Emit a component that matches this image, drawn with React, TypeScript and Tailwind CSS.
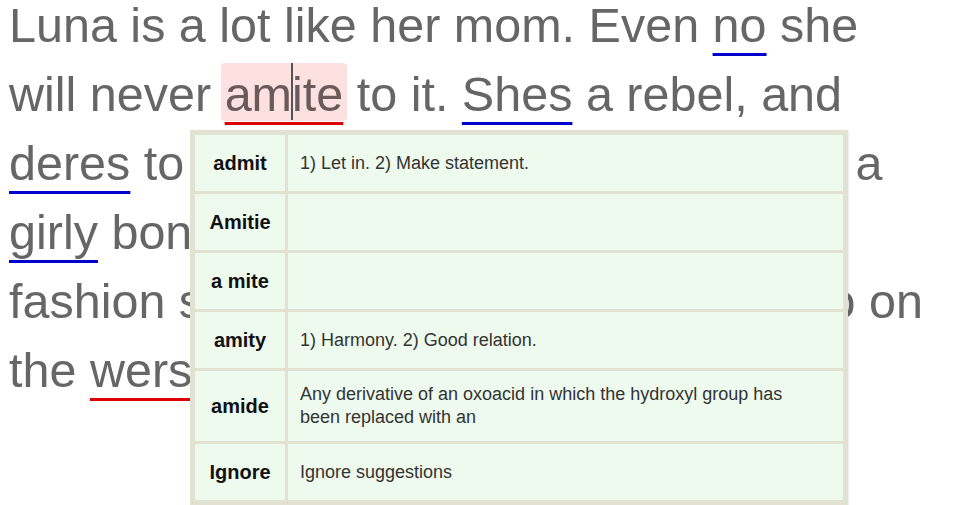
import React from "react";

const suggestions = [
  { word: "admit", def: "1) Let in. 2) Make statement." },
  { word: "Amitie", def: "" },
  { word: "a mite", def: "" },
  { word: "amity", def: "1) Harmony. 2) Good relation." },
  {
    word: "amide",
    def: "Any derivative of an oxoacid in which the hydroxyl group has\nbeen replaced with an",
  },
  { word: "Ignore", def: "Ignore suggestions" },
];

function Grammar({ children }: { children: React.ReactNode }) {
  return (
    <span className="underline decoration-[#0000cc] decoration-[3px] underline-offset-[11px]">
      {children}
    </span>
  );
}

function Spelling({ children }: { children: React.ReactNode }) {
  return (
    <span className="underline decoration-[#dd0000] decoration-[3px] underline-offset-[11px]">
      {children}
    </span>
  );
}

export default function App() {
  return (
    <div className="relative h-[505px] w-[954px] overflow-hidden bg-white font-['Liberation_Sans',Arial,sans-serif]">
      <div className="-mt-[9px] pl-[9px] text-[48.5px] leading-[69px] whitespace-nowrap text-[#666666]">
        <div>
          Luna is a lot like her mom. Even <Grammar>no</Grammar> she
        </div>
        <div>
          will never{" "}
          <span className="-mx-[4px] rounded-[4px] bg-[#fde0e0] px-[4px] pt-[4px] text-[#6b5a5a]">
            <Spelling>
              am
              <span className="relative">
                <span className="absolute -top-[4px] left-[-1px] h-[57px] w-[2px] bg-[#555555]" />
              </span>
              ite
            </Spelling>
          </span>{" "}
          to it. <Grammar>Shes</Grammar> a rebel, and
        </div>
        <div>
          <Grammar>deres</Grammar> to wear jeans and boots. It is not a
        </div>
        <div>
          <Grammar>girly</Grammar> bonnet type of girl. Her
        </div>
        <div>fashion sense is fun and she likes to go on</div>
        <div>
          the <Spelling>wersest</Spelling> rides at the fair.
        </div>
      </div>

      <div className="absolute left-[190px] top-[130px] grid grid-cols-[90px_555px] grid-rows-[56px_56px_56px_56px_70px_56px] gap-[3px] bg-[#e2e2d3] p-[5px] shadow-[1px_1px_2px_rgba(0,0,0,0.08)]">
        {suggestions.map((s) => (
          <React.Fragment key={s.word}>
            <div className="flex items-center justify-center bg-[#eefaee] text-[20px] font-bold text-[#111111]">
              {s.word}
            </div>
            <div className="flex items-center whitespace-pre-line bg-[#eefaee] px-[12px] text-[18px] leading-[23px] text-[#333333]">
              {s.def}
            </div>
          </React.Fragment>
        ))}
      </div>
    </div>
  );
}
